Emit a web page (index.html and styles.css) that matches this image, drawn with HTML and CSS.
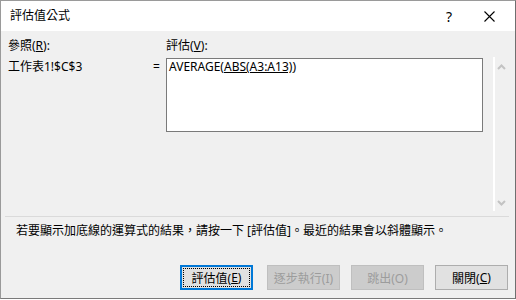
FILE: index.html
```html
<!DOCTYPE html>
<html>

<head>
    <meta charset="utf-8" />
    <title>評估值公式</title>
    <link rel="stylesheet" href="styles.css">
</head>

<body>
    <div class="dialog">
        <div class="titlebar">
            <span class="title">評估值公式</span>
            <span class="help">?</span>
            <span class="close">
                <svg width="11" height="11" viewBox="0 0 11 11">
                    <path d="M0.5 0.5 L10.5 10.5 M10.5 0.5 L0.5 10.5" stroke="#000" stroke-width="1.1" fill="none" />
                </svg>
            </span>
        </div>
        <div class="content">
            <div class="fields">
                <div class="label">參照(<u>R</u>):</div>
                <div></div>
                <div class="label">評估(<u>V</u>):</div>
                <div class="ref">工作表1!$C$3</div>
                <div class="eq">=</div>
                <div class="textbox">AVERAGE(<u>ABS(A3:A13)</u>)</div>
            </div>
            <div class="scroll">
                <svg width="9" height="6" viewBox="0 0 9 6">
                    <path d="M1 5 L4.5 1.5 L8 5" stroke="#c3c3c3" stroke-width="2" fill="none" />
                </svg>
                <svg width="9" height="6" viewBox="0 0 9 6">
                    <path d="M1 1 L4.5 4.5 L8 1" stroke="#c3c3c3" stroke-width="2" fill="none" />
                </svg>
            </div>
        </div>
        <div class="separator"></div>
        <div class="message">若要顯示加底線的運算式的結果，請按一下 [評估值]。最近的結果會以斜體顯示。</div>
        <div class="buttons">
            <button type="button" class="btn btn-focus"><span class="focus-rect">評估值(<u>E</u>)</span></button>
            <button type="button" class="btn" disabled>逐步執行(I)</button>
            <button type="button" class="btn" disabled>跳出(O)</button>
            <button type="button" class="btn">關閉(<u>C</u>)</button>
        </div>
    </div>
</body>

</html>
```

FILE: styles.css
```css
body {
    margin: 0;
    font-family: "Noto Sans", "Noto Sans CJK TC", sans-serif;
    font-size: 12px;
    color: #000;
}

.dialog {
    width: 516px;
    height: 299px;
    box-sizing: border-box;
    border: 1px solid #9a9a9a;
    border-right-color: #6f6f6f;
    border-bottom-color: #7a7a7a;
    background-color: #f0f0f0;
}

.titlebar {
    height: 30px;
    background-color: #fff;
    display: flex;
    align-items: center;
}

.title {
    margin-left: 9px;
    line-height: 16px;
    flex: 1;
}

.help {
    font-size: 14px;
    width: 20px;
    text-align: center;
    margin-right: 25px;
}

.close {
    width: 11px;
    height: 11px;
    margin-right: 20px;
    display: flex;
}

.content {
    display: flex;
    height: 183px;
}

.fields {
    flex: 1;
    padding: 7px 0 0 7px;
    display: grid;
    grid-template-columns: 145px 13px 317px;
    grid-template-rows: 16px auto;
    row-gap: 4px;
    align-content: start;
}

.label,
.ref,
.eq {
    line-height: 16px;
}

.ref,
.eq {
    padding-top: 1px;
}

.textbox {
    height: 74px;
    box-sizing: border-box;
    border: 1px solid #7a7a7a;
    background-color: #fff;
    padding: 0 2px;
    line-height: 16px;
}

.scroll {
    width: 15px;
    height: 154px;
    margin: 26px 7px 0 8px;
    border-left: 2px solid #fff;
    display: flex;
    flex-direction: column;
    justify-content: space-between;
    align-items: center;
    padding: 7px 0 5px;
    box-sizing: border-box;
}

.separator {
    height: 1px;
    margin: 2px 6px 0 4px;
    background-color: #dadada;
}

.message {
    padding: 6px 0 0 15px;
    line-height: 16px;
}

.buttons {
    display: flex;
    justify-content: flex-end;
    gap: 11px;
    margin-top: 26px;
    padding-right: 7px;
}

.btn {
    width: 73px;
    height: 25px;
    box-sizing: border-box;
    font: inherit;
    color: #000;
    background-color: #e1e1e1;
    border: 1px solid #adadad;
    padding: 0;
    display: flex;
    align-items: center;
    justify-content: center;
}

.btn:disabled {
    background-color: #cccccc;
    border-color: #bfbfbf;
    color: #9c9c9c;
}

.btn-focus {
    border: 2px solid #0078d7;
    margin-right: 3px;
    padding: 1px;
}

.focus-rect {
    width: 100%;
    height: 100%;
    box-sizing: border-box;
    border: 1px dotted #000;
    display: flex;
    align-items: center;
    justify-content: center;
}
```
